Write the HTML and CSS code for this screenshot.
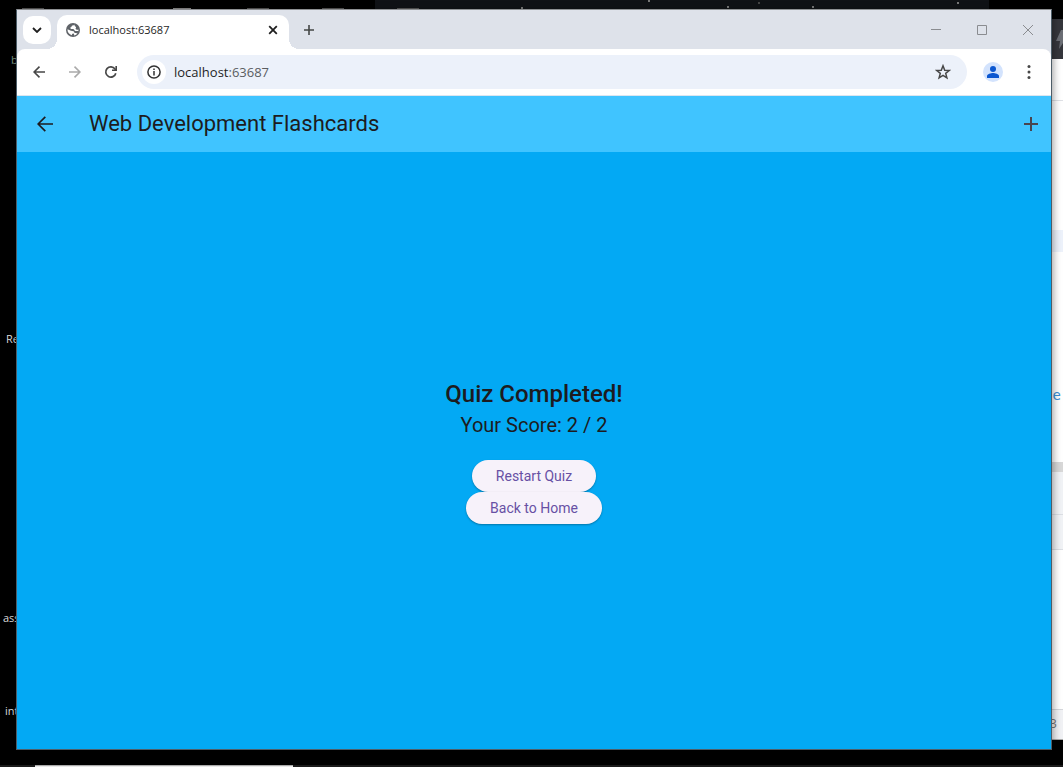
FILE: index.html
```html
<!DOCTYPE html>
<html lang="en">
<head>
<meta charset="utf-8">
<title>Web Development Flashcards</title>
<link rel="stylesheet" href="styles.css">
</head>
<body>
<div class="desktop" aria-hidden="true">
  <div class="dark-window"></div>
  <i class="tile tile-a"></i><i class="tile tile-b"></i><i class="tile tile-c"></i><i class="tile tile-d"></i><i class="tile tile-e"></i>
  <i class="speck speck-a"></i><i class="speck speck-b"></i><i class="speck speck-c"></i><i class="speck speck-d"></i><i class="speck speck-e"></i><i class="speck speck-f"></i>
  <span class="label label-b">b</span>
  <span class="label label-re">Re</span>
  <span class="label label-ass">ass</span>
  <span class="label label-int">int</span>
  <div class="side-window">
    <div class="side-head"><svg width="8" height="20" viewBox="0 0 8 20"><path d="M6 0 1 11h4L4 19l6-9V0z" fill="#6b6e75"/></svg></div>
    <div class="side-bar"></div>
    <div class="side-page">
      <div class="side-stripe"></div>
      <span class="side-link">te</span>
    </div>
    <div class="side-divider"></div>
    <div class="side-row"></div>
    <div class="side-row side-row-short"></div>
    <div class="side-blank"></div>
    <div class="side-foot">3</div>
  </div>
  <div class="taskbar"><div class="taskbar-item"></div></div>
</div>

<div class="browser">
  <div class="tabstrip">
    <button class="tab-search" aria-label="Search tabs"><svg width="10" height="6" viewBox="0 0 10 6"><path d="m1 1 4 4 4-4" fill="none" stroke="#1f1f1f" stroke-width="1.8"/></svg></button>
    <div class="tab">
      <svg class="globe" width="14" height="14" viewBox="0 0 14 14"><circle cx="7" cy="7" r="7" fill="#5f6368"/><path d="M8.500 1.600C8.300 2.600 7.200 2.400 6.400 2.600c-.9.200-.6 1.500-1.500 1.700-1 .2-.7 1.500.2 1.600 1.500.2 3-.3 3.300 1.200.2 1.100 1.200.9 2.100.9h2c-.2 1-.7 2-1.400 2.700-.5-1-1.700-.7-2.100-.7-.9 0-.7-1.500-1.500-1.700C6.100 8 3.900 7.700 1.500 6.300c-.3 2.900 1.700 5 4.300 5.900.3-1.300.3-1.700 1.400-1.800 1-.1 1 .8.900 2.100 3-.6 4.700-3 4.400-6.100-.9.400-2.300.5-2.800-.3-.4-.7.700-1.200.2-2-.4-.6-1.600-.6-1.400-2.500z" fill="#fff"/></svg>
      <span class="tab-title">localhost:63687</span>
      <button class="tab-close" aria-label="Close tab"><svg width="10" height="10" viewBox="0 0 10 10"><path d="m1.200 1.200 7.600 7.600m0-7.600L1.200 8.800" stroke="#1f1f1f" stroke-width="1.800"/></svg></button>
    </div>
    <button class="new-tab" aria-label="New tab"><svg width="12" height="12" viewBox="0 0 12 12"><path d="M6 1v10M1 6h10" stroke="#444746" stroke-width="1.600"/></svg></button>
    <div class="window-controls">
      <button aria-label="Minimize"><svg width="10" height="10" viewBox="0 0 10 10"><path d="M0 4.500h10" stroke="#8a8c90"/></svg></button>
      <button aria-label="Maximize"><svg width="10" height="10" viewBox="0 0 10 10"><path d="M.5.5h9v9h-9z" fill="none" stroke="#8a8c90"/></svg></button>
      <button aria-label="Close"><svg width="10" height="10" viewBox="0 0 10 10"><path d="m0 0 10 10M10 0 0 10" stroke="#8a8c90"/></svg></button>
    </div>
  </div>

  <div class="toolbar-wrap">
  <div class="toolbar">
    <button class="nav" aria-label="Back"><svg width="12" height="12" viewBox="0 0 12 12"><path d="M12 6H1M6.500.6 1.100 6l5.400 5.400" fill="none" stroke="#474747" stroke-width="1.600"/></svg></button>
    <button class="nav" aria-label="Forward" disabled><svg width="12" height="12" viewBox="0 0 12 12"><path d="M0 6h11M5.500.6 10.900 6l-5.400 5.400" fill="none" stroke="#aaa" stroke-width="1.600"/></svg></button>
    <button class="nav" aria-label="Reload"><svg width="14" height="14" viewBox="0 0 14 14"><path d="M11.800 8.200A5.100 5.100 0 1 1 11 4l1 1.200" fill="none" stroke="#474747" stroke-width="1.700"/><path d="M13 1v5H8V4.500h3.400V1z" fill="#474747"/></svg></button>
    <div class="omnibox">
      <button class="site-info" aria-label="View site information"><svg width="14" height="14" viewBox="0 0 14 14"><circle cx="7" cy="7" r="6.100" fill="none" stroke="#333" stroke-width="1.500"/><path d="M7 6v4.500M7 3.400V5" stroke="#333" stroke-width="1.500"/></svg></button>
      <div class="address" role="textbox" aria-label="Address" tabindex="0">localhost<span>:63687</span></div>
      <button class="star" aria-label="Bookmark this tab"><svg width="16" height="16" viewBox="0 0 16 16"><path d="m8 1.800 1.700 4.400 4.600.3-3.600 2.900 1.200 4.500L8 11.400l-3.900 2.500 1.200-4.500-3.600-2.900 4.600-.3z" fill="none" stroke="#474747" stroke-width="1.500"/></svg></button>
    </div>
    <button class="profile" aria-label="Profile"><svg width="12" height="12" viewBox="0 0 12 12"><circle cx="6" cy="3" r="3" fill="#0b57d0"/><path d="M0 12v-2c0-2 4-3 6-3s6 1 6 3v2z" fill="#0b57d0"/></svg></button>
    <button class="menu" aria-label="Menu"><svg width="4" height="14" viewBox="0 0 4 14"><g fill="#474747"><circle cx="2" cy="1.500" r="1.500"/><circle cx="2" cy="7" r="1.500"/><circle cx="2" cy="12.500" r="1.500"/></g></svg></button>
  </div>
  </div>

  <header class="appbar">
    <button class="app-back" aria-label="Back"><svg width="16" height="16" viewBox="0 0 16 16"><path d="M16 8H1.500M8.300.8 1.100 8l7.200 7.200" fill="none" stroke="#1d1b20" stroke-width="1.700"/></svg></button>
    <h1>Web Development Flashcards</h1>
    <button class="app-add" aria-label="Add flashcard"><svg width="14" height="14" viewBox="0 0 14 14"><path d="M14 8H8v6H6V8H0V6h6V0h2v6h6z" fill="#49454f"/></svg></button>
  </header>
  <main class="result">
    <h2>Quiz Completed!</h2>
    <p>Your Score: 2 / 2</p>
    <button class="pill">Restart Quiz</button>
    <button class="pill">Back to Home</button>
  </main>
</div>
</body>
</html>
```
FILE: styles.css
```css
* { box-sizing: border-box; }
body { margin: 0; background: #000; font-family: "Open Sans", "Noto Sans", sans-serif; overflow: hidden; }
button { display: flex; align-items: center; justify-content: center; flex: none; padding: 0; border: 0; background: none; }
svg { display: block; flex: none; }

.desktop { position: absolute; inset: 0; overflow: hidden; }
.dark-window { position: absolute; left: 375px; right: 74px; top: 0; height: 60px; background: #101216; }
.tile { position: absolute; top: 8px; width: 22px; height: 1px; background: #555; }
.tile-a { left: 22px; }
.tile-b { left: 173px; width: 18px; background: #888; }
.tile-c { left: 247px; }
.tile-d { left: 322px; }
.tile-e { left: 397px; }
.speck { position: absolute; width: 2px; height: 2px; top: 6px; background: #777; }
.speck-a { left: 521px; top: 7px; }
.speck-b { left: 648px; top: 0; }
.speck-c { left: 727px; }
.speck-d { left: 758px; top: 2px; background: #444; }
.speck-e { left: 812px; }
.speck-f { left: 957px; top: 2px; }
.label { position: absolute; color: #ddd; font-size: 11px; line-height: 16px; }
.label-b { left: 11px; top: 52px; color: #7d9583; }
.label-re { left: 6px; top: 331px; }
.label-ass { left: 3px; top: 610px; }
.label-int { left: 5px; top: 703px; }

.side-window { position: absolute; top: 19px; bottom: 27px; right: 0; width: 60px; display: flex; flex-direction: column; background: #fff; border-bottom: 1px solid #aaa; }
.side-head { height: 40px; background: #35363c; display: flex; justify-content: flex-end; padding-top: 11px; }
.side-bar { height: 42px; border-bottom: 1px solid #dfe1e6; }
.side-page { height: 361px; padding-top: 129px; text-align: right; }
.side-stripe { height: 22px; background: #edf2fb; margin-bottom: 134px; }
.side-link { display: block; padding-right: 2px; font: 14px/18px "DejaVu Sans Mono", monospace; color: #3b8fd6; }
.side-divider { height: 10px; background: #d8d8d8; }
.side-row { height: 43px; background: #f1f3f6; border-bottom: 1px solid #dcdfe4; }
.side-row-short { height: 35px; }
.side-blank { flex: 1; }
.side-foot { height: 30px; padding-right: 6px; border-top: 1px solid #d5d7db; background: #f1f2f5; color: #777; font-size: 13px; line-height: 26px; text-align: right; }
.taskbar { position: absolute; left: 0; right: 0; bottom: 0; height: 2px; padding-left: 35px; background: #1b1b1b; }
.taskbar-item { width: 258px; height: 2px; background: #e8e8e8; border-top: 1px solid #aaa; }

.browser { position: relative; display: flex; flex-direction: column; height: calc(100vh - 26px); margin: 9px 11px 17px 16px; border: 1px solid #4d5d68; border-top-color: #8e9093; box-shadow: 1px 2px 8px rgba(0,0,0,.4); }
.tabstrip { display: flex; align-items: center; height: 39px; padding-left: 6px; background: #dee2ea; }
.tab-search { width: 28px; height: 28px; border-radius: 10px; background: #fff; }
.tab { position: relative; align-self: flex-end; display: flex; align-items: center; width: 232px; height: 34px; margin-left: 6px; padding: 0 10px 5px 9px; border-radius: 10px 10px 0 0; background: #fff; }
.tab::before, .tab::after { content: ""; position: absolute; bottom: 0; width: 10px; height: 10px; }
.tab::before { right: 100%; background: radial-gradient(circle at 0 0, transparent 10px, #fff 10px); }
.tab::after { left: 100%; background: radial-gradient(circle at 100% 0, transparent 10px, #fff 10px); }
.tab-title { flex: 1; margin-left: 9px; color: #1f1f1f; font-size: 11px; line-height: 16px; }
.tab-close { width: 12px; height: 16px; }
.new-tab { width: 28px; height: 28px; margin-left: 6px; }
.window-controls { display: flex; margin-left: auto; }
.window-controls button { width: 46px; height: 38px; }

.toolbar-wrap { background: #dee2ea; }
.toolbar { display: flex; align-items: center; height: 47px; padding: 0 8px 0 4px; background: #fff; border-bottom: 1px solid #dce6f0; border-radius: 8px 8px 0 0; }
.nav { width: 36px; height: 34px; }
.omnibox { flex: 1; display: flex; align-items: center; height: 34px; margin-left: 8px; padding: 0 14px 0 5px; border-radius: 17px; background: #ecf1fa; }
.site-info { width: 24px; height: 24px; border-radius: 50%; background: #fff; }
.address { flex: 1; margin-left: 8px; color: #1f1f1f; font-size: 13px; line-height: 20px; }
.address span { color: #5a5d61; }
.star { width: 20px; height: 20px; }
.profile { width: 20px; height: 20px; margin-left: 16px; border-radius: 50%; background: #d3e3fd; }
.menu { width: 28px; height: 34px; margin-left: 12px; }

.appbar { display: flex; align-items: center; height: 56px; flex: none; padding: 0 0 0 8px; background: #40c4ff; }
.app-back, .app-add { width: 40px; height: 40px; }
.appbar h1 { flex: 1; margin: 0 0 0 24px; color: #1d1b20; font: 400 22px/28px Roboto, sans-serif; }
.result { flex: 1; display: flex; flex-direction: column; align-items: center; justify-content: center; padding-top: 1px; background: #03a9f4; font-family: Roboto, sans-serif; color: #1d1b20; }
.result h2 { margin: 0; font-size: 24px; line-height: 32px; font-weight: 500; }
.result p { margin: 0 0 20px; font-size: 20px; line-height: 30px; }
.pill { height: 32px; padding: 0 24px; border-radius: 16px; background: #f7f2fa; color: #6750a4; font: 400 14px/20px Roboto, sans-serif; box-shadow: 0 1px 2px rgba(0,0,0,.3); }
```
